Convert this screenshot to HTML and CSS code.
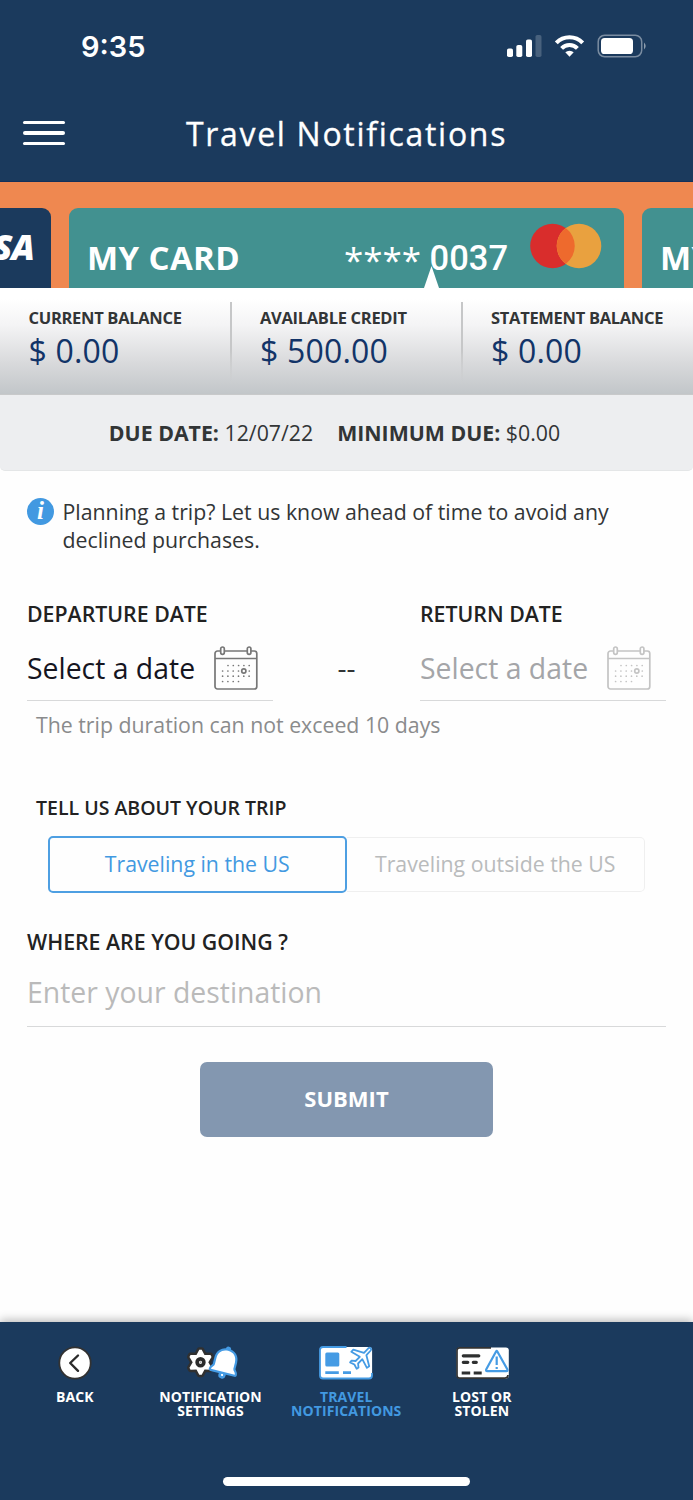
FILE: index.html
```html
<!DOCTYPE html>
<html lang="en">
<head>
<meta charset="UTF-8">
<meta name="viewport" content="width=device-width, initial-scale=1.0">
<title>Travel Notifications</title>
<link rel="stylesheet" href="styles.css">
</head>
<body>
<header class="header">
    <div class="status-bar">
        <span class="time">9:35</span>
        <svg class="status-icons" width="140" height="24" viewBox="0 0 140 24">
            <g fill="#fff">
                <rect x="1" y="14.5" width="6" height="8.5" rx="1.8"/>
                <rect x="10.3" y="11" width="6" height="12" rx="1.8"/>
                <rect x="20" y="5.5" width="6" height="17.5" rx="1.8"/>
                <rect x="29.5" y="1" width="6" height="22" rx="1.8" opacity=".2"/>
            </g>
            <g fill="none" stroke="#fff" stroke-width="4">
                <path d="M50.300 8.800a18.200 18.200 0 0 1 26.400 0"/>
                <path d="M55.600 14.400a11 11 0 0 1 15.800 0"/>
            </g>
            <path d="M59.3 18.300a6.300 6.300 0 0 1 8.400 0L63.500 22.800z" fill="#fff"/>
            <rect x="92.2" y="1.2" width="43.5" height="21.6" rx="6.5" fill="none" stroke="#fff" stroke-opacity=".42" stroke-width="1.5"/>
            <rect x="95" y="4" width="32" height="16" rx="3.6" fill="#fff"/>
            <path d="M138 8.500q3.400 3.500 0 7z" fill="#fff" opacity=".5"/>
        </svg>
    </div>
    <div class="title-bar">
        <button class="menu" aria-label="Menu"><span></span><span></span><span></span></button>
        <h1>Travel Notifications</h1>
    </div>
</header>

<section class="cards">
    <div class="card card-visa"><span class="visa">VISA</span></div>
    <div class="card card-main">
        <span class="card-name">MY CARD</span>
        <span class="card-number"><span class="stars">****</span> 0037</span>
        <svg class="mastercard" width="72" height="46" viewBox="0 0 72 46">
            <circle cx="22.5" cy="23" r="22.3" fill="#d92d2c"/>
            <circle cx="49" cy="23" r="22.3" fill="#e9a13f"/>
            <path d="M35.750 5.100a22.300 22.300 0 0 1 0 35.800a22.300 22.300 0 0 1 0-35.800z" fill="#ee6a2d"/>
        </svg>
        <span class="pointer"></span>
    </div>
    <div class="card card-next"><span class="card-name">MY CARD</span></div>
</section>

<section class="balances">
    <div class="balance"><h2>CURRENT BALANCE</h2><p>$ 0.00</p></div>
    <div class="balance"><h2>AVAILABLE CREDIT</h2><p>$ 500.00</p></div>
    <div class="balance"><h2>STATEMENT BALANCE</h2><p>$ 0.00</p></div>
</section>

<section class="due">
    <p><b>DUE DATE:</b> 12/07/22</p>
    <p><b>MINIMUM DUE:</b> $0.00</p>
</section>

<main class="content">
    <div class="info">
        <span class="info-icon">i</span>
        <p>Planning a trip? Let us know ahead of time to avoid any declined purchases.</p>
    </div>

    <div class="dates">
        <div class="date">
            <label>DEPARTURE DATE</label>
            <button class="date-field">Select a date
                <svg class="calendar" width="44" height="46" viewBox="0 0 44 46">
                    <g fill="none" stroke="currentColor" stroke-width="1.7">
                        <rect x="1" y="6" width="41.8" height="38" rx="2.5"/>
                        <path d="M1 13.500h41.800"/>
                        <rect x="6.7" y="2" width="3.6" height="7.3" rx="1.8" fill="#fff"/>
                        <rect x="33.3" y="2" width="3.6" height="7.3" rx="1.8" fill="#fff"/>
                        <circle cx="29.8" cy="26" r="2.1"/>
                    </g>
                    <g fill="none" stroke="currentColor" stroke-width="1.7" stroke-linecap="round">
                        <path stroke-dasharray="0 5.300" d="M14 20.500h22"/>
                        <path stroke-dasharray="0 5.300" d="M8.600 26h17M35.300 26h1"/>
                        <path stroke-dasharray="0 5.300" d="M8.600 31.200h27"/>
                        <path stroke-dasharray="0 5.300" d="M8.600 36.500h17"/>
                    </g>
                </svg>
            </button>
        </div>
        <span class="dash">--</span>
        <div class="date disabled">
            <label>RETURN DATE</label>
            <button class="date-field">Select a date
                <svg class="calendar" width="44" height="46" viewBox="0 0 44 46">
                    <g fill="none" stroke="currentColor" stroke-width="1.7">
                        <rect x="1" y="6" width="41.8" height="38" rx="2.5"/>
                        <path d="M1 13.500h41.800"/>
                        <rect x="6.7" y="2" width="3.6" height="7.3" rx="1.8" fill="#fff"/>
                        <rect x="33.3" y="2" width="3.6" height="7.3" rx="1.8" fill="#fff"/>
                        <circle cx="29.8" cy="26" r="2.1"/>
                    </g>
                    <g fill="none" stroke="currentColor" stroke-width="1.7" stroke-linecap="round">
                        <path stroke-dasharray="0 5.300" d="M14 20.500h22"/>
                        <path stroke-dasharray="0 5.300" d="M8.600 26h17M35.300 26h1"/>
                        <path stroke-dasharray="0 5.300" d="M8.600 31.200h27"/>
                        <path stroke-dasharray="0 5.300" d="M8.600 36.500h17"/>
                    </g>
                </svg>
            </button>
        </div>
    </div>
    <p class="hint">The trip duration can not exceed 10 days</p>

    <h3 class="trip-title">TELL US ABOUT YOUR TRIP</h3>
    <div class="toggle">
        <button class="active">Traveling in the US</button>
        <button>Traveling outside the US</button>
    </div>

    <label class="where" for="destination">WHERE ARE YOU GOING ?</label>
    <input type="text" id="destination" placeholder="Enter your destination">

    <button class="submit">SUBMIT</button>
</main>

<nav class="tabs">
    <div class="tab-list">
        <a class="tab">
            <svg width="56" height="36" viewBox="0 0 56 36">
                <circle cx="28" cy="18" r="15.7" fill="#fff" stroke="#323232" stroke-width="1.8"/>
                <path d="M31 10.500L23.200 18l7.800 7.800" fill="none" stroke="#2b2b2b" stroke-width="2.4" stroke-linecap="round" stroke-linejoin="round"/>
            </svg>
            <span>BACK</span>
        </a>
        <a class="tab">
            <svg width="56" height="36" viewBox="0 0 56 36">
                <path d="M16.300 4.800h2.400L21.500 10l6-.1 1 2-3.200 5.400 3.200 5.400-1 2-6-.1-2.800 5.200h-2.400l-2.800-5.200-6 .1-1-2 3.200-5.400-3.200-5.400 1-2 6 .1z" fill="#fff" stroke="#303030" stroke-width="5" stroke-linejoin="round" paint-order="stroke"/>
                <circle cx="17.5" cy="17.3" r="3.4" fill="#fff" stroke="#2b2b2b" stroke-width="3.6"/>
                <circle cx="17.5" cy="17.3" r="1" fill="#aaa"/>
                <g transform="rotate(14 42 18)" stroke="#459be4" stroke-linejoin="round">
                    <circle cx="42" cy="3.8" r="1.6" fill="#459be4" stroke-width="2"/>
                    <circle cx="42" cy="30.3" r="2.4" fill="#fff" stroke-width="2.6"/>
                    <path d="M42 5.500c-6 0-9.500 4-9.500 9.500v6.600c0 2-2.800 3-2.800 5.400h24.600c0-2.400-2.800-3.400-2.800-5.400V15c0-5.500-3.500-9.500-9.500-9.500z" fill="#fff" stroke-width="4.4" paint-order="stroke"/>
                </g>
            </svg>
            <span>NOTIFICATION<br>SETTINGS</span>
        </a>
        <a class="tab current">
            <svg width="56" height="36" viewBox="0 0 56 36">
                <rect x="1.9" y="1.9" width="52.2" height="31.8" rx="3" fill="#fff"/>
                <path d="M28.500 2H5Q2 2 2 5v25.500q0 3 3 3h46q3 0 3-3V28" fill="none" stroke="#459be4" stroke-width="1.8"/>
                <rect x="7.3" y="7.5" width="14" height="14" rx="1.5" fill="#459be4"/>
                <path d="M7.300 27.600h13.500M25 27.600h8" stroke="#459be4" stroke-width="2.8"/>
                <path d="M50.300 3.300c1.800-1.500 3.800.4 2.400 2.200l-4.300 4.700 2.800 11-2.300 1.700-4.600-8.700-4.200 4.300.4 4-1.800 1.300-2.300-4.300-4.300-2.100 1.500-1.800 4 .4 4.200-4.200-8.500-5 2-2.100 10.700 3.100z" fill="#fff" stroke="#459be4" stroke-width="1.8" stroke-linejoin="round"/>
            </svg>
            <span>TRAVEL<br>NOTIFICATIONS</span>
        </a>
        <a class="tab">
            <svg width="56" height="36" viewBox="0 0 56 36">
                <rect x="2.6" y="2.4" width="52.2" height="31.2" rx="3" fill="#fff"/>
                <path d="M37 2.900H5.500Q3 2.900 3 5.500v25q0 2.600 2.500 2.600H51q3 0 3-3" fill="none" stroke="#333" stroke-width="1.7"/>
                <path d="M9.300 10.800h15.500M9.300 17.300h4.500M19.300 17.300h3" stroke="#2f3030" stroke-width="3.2" stroke-linecap="round"/>
                <path d="M7.700 28h8.500M19.700 28h8" stroke="#2f3030" stroke-width="3"/>
                <path d="M43.200 6.300Q42.700 5.600 42.200 6.300L32.300 24.200q-.8 1.900 1 1.900h19q1.800 0 1-1.900z" fill="#fff" stroke="#459be4" stroke-width="2.2" stroke-linejoin="round"/>
                <path d="M42.700 11.500v8.500M42.700 22v2" stroke="#459be4" stroke-width="2.2"/>
            </svg>
            <span>LOST OR<br>STOLEN</span>
        </a>
    </div>
    <div class="home-bar"></div>
</nav>
</body>
</html>
```
FILE: styles.css
```css
* {
    box-sizing: border-box;
}
body {
    margin: 0;
    height: 1500px;
    display: flex;
    flex-direction: column;
    overflow: hidden;
    background: #fefefe;
    color: #323536;
    font-family: "Open Sans", sans-serif;
}
h1, h2, h3, p {
    margin: 0;
}
button {
    font-family: inherit;
    padding: 0;
    border: none;
    background: none;
}

/* Header */
.header {
    height: 182px;
    background: #1b3a5d;
    border-bottom: 1px solid #15305a;
    color: #fff;
}
.status-bar {
    display: flex;
    justify-content: space-between;
    align-items: center;
    height: 92px;
    padding: 0 47px 0 81px;
}
.time {
    font-family: Inter, sans-serif;
    font-weight: 600;
    font-size: 29px;
}
.title-bar {
    display: grid;
    grid-template-columns: 42px 1fr 42px;
    align-items: center;
    height: 82px;
    padding: 0 23px;
}
.menu {
    display: flex;
    flex-direction: column;
    gap: 7px;
}
.menu span {
    width: 42px;
    height: 3.3px;
    border-radius: 2px;
    background: #fff;
}
h1 {
    padding-top: 2px;
    font-size: 32px;
    font-weight: 500;
    line-height: 44px;
    letter-spacing: 1.7px;
    text-align: center;
    -webkit-text-stroke: .3px #fff;
}

/* Card carousel */
.cards {
    display: flex;
    justify-content: center;
    gap: 18px;
    height: 106px;
    padding-top: 26px;
    background: #ef8850;
    overflow: hidden;
}
.card {
    flex: none;
    width: 555px;
    height: 80px;
    border-radius: 9px 9px 0 0;
    background: #429190;
    color: #fff;
    display: flex;
    align-items: center;
    padding: 0 18px;
}
.card-main {
    position: relative;
}
.card-visa {
    background: #1b3a5d;
    justify-content: flex-end;
    padding-right: 17px;
}
.visa {
    padding-bottom: 4px;
    font-size: 35px;
    font-weight: 800;
    font-style: italic;
    letter-spacing: -1px;
}
.card-name {
    font-size: 33px;
    font-weight: 700;
    line-height: 40px;
    letter-spacing: .4px;
    padding-top: 20px;
}
.card-number {
    margin-left: auto;
    font-family: Roboto, sans-serif;
    font-size: 34.5px;
    font-weight: 500;
    line-height: 40px;
    padding-top: 20px;
}
.stars {
    font-family: "Open Sans", sans-serif;
    font-size: 35px;
    font-weight: 400;
    line-height: 30px;
    vertical-align: -3px;
}
.mastercard {
    margin: 0 4px 5px 22px;
}
.pointer {
    position: absolute;
    left: 355px;
    bottom: 0;
    width: 15px;
    height: 22px;
    background: #fff;
    clip-path: polygon(50% 0, 100% 100%, 0 100%);
}

/* Balances */
.balances {
    display: grid;
    grid-template-columns: 229.5px 231px 1fr;
    height: 107px;
    padding-top: 14px;
    background: linear-gradient(#fff 10%, #f4f4f5 35%, #d9dadc 70%, #c2c6c9);
    border-bottom: 1px solid #c8c9ca;
}
.balance {
    height: 80px;
    padding-left: 28.5px;
    border-left: 2px solid;
    border-image: linear-gradient(#c6c7c8 60%, #c6c7c800) 1;
}
.balance:first-child {
    border: none;
}
h2 {
    margin-top: 4px;
    font-size: 16.5px;
    font-weight: 700;
    line-height: 24px;
    letter-spacing: -.3px;
    white-space: nowrap;
}
.balance p {
    color: #123468;
    font-size: 32px;
    line-height: 42px;
    letter-spacing: .2px;
}
.due {
    display: flex;
    justify-content: center;
    gap: 24px;
    height: 76px;
    padding-right: 24px;
    background: #edeef0;
    border-bottom: 1px solid #e4e6e7;
    border-radius: 0 0 5px 5px;
    font-size: 21.3px;
    line-height: 75px;
}

/* Form */
.content {
    flex: 1;
    display: flex;
    flex-direction: column;
    padding: 27px 27px 0;
}
.info {
    display: flex;
    gap: 8.5px;
    font-size: 21.3px;
    line-height: 28px;
}
.info-icon {
    flex: none;
    width: 27px;
    height: 27px;
    border-radius: 50%;
    background: #4299e1;
    color: #fff;
    font-family: "Liberation Serif", serif;
    font-weight: bold;
    font-style: italic;
    font-size: 25px;
    line-height: 26px;
    text-align: center;
}
.dates {
    display: flex;
    justify-content: space-between;
    align-items: flex-end;
    margin-top: 46px;
}
.date {
    width: 246px;
}
.date label,
.where {
    display: block;
    color: #222;
    font-size: 21.3px;
    font-weight: 600;
    line-height: 28px;
}
.date-field {
    display: flex;
    align-items: center;
    justify-content: space-between;
    width: 100%;
    height: 66px;
    margin-top: 7px;
    padding-right: 15px;
    border-bottom: 1px solid #d8d9da;
    color: #15151f;
    font-size: 28.4px;
}
.calendar {
    color: #777;
}
.disabled .date-field {
    color: #a4a5a8;
}
.disabled .calendar {
    color: #c4c4c4;
}
.dash {
    font-size: 28px;
    font-weight: 500;
    line-height: 68px;
}
.hint {
    margin: 10px 0 0 9px;
    color: #8a8b8c;
    font-size: 21.3px;
    line-height: 28px;
}
.trip-title {
    margin: 55px 0 0 9px;
    color: #222;
    font-size: 19.5px;
    font-weight: 600;
    line-height: 28px;
}
.toggle {
    display: flex;
    align-items: center;
    margin: 14px 21px 0;
    height: 57px;
}
.toggle button {
    width: 299px;
    height: 55px;
    padding-bottom: 3px;
    border: 1px solid #efefef;
    border-left: none;
    border-radius: 0 5px 5px 0;
    color: #b9bbbc;
    font-size: 21.3px;
}
.toggle .active {
    height: 57px;
    border: 2px solid #4e9fe2;
    border-radius: 5px;
    color: #4299e1;
}
.where {
    margin-top: 35px;
}
#destination {
    width: 100%;
    height: 71px;
    padding: 2px 0 0;
    border: none;
    border-bottom: 1px solid #d8d9da;
    background: none;
    font-family: inherit;
    font-size: 28.4px;
}
#destination::placeholder {
    color: #bababa;
}
.submit {
    align-self: center;
    width: 293px;
    height: 75px;
    margin-top: 35px;
    padding-bottom: 4px;
    border-radius: 7px;
    background: #8397b0;
    color: #fff;
    font-size: 22px;
    font-weight: 700;
}

/* Bottom tabs */
.tabs {
    display: flex;
    flex-direction: column;
    height: 178px;
    background: #1b3a5d;
    box-shadow: 0 -2px 9px rgba(0, 0, 0, .28);
}
.tab-list {
    display: grid;
    grid-template-columns: repeat(4, 135.7px);
    padding: 23px 0 0 7px;
}
.tab {
    display: flex;
    flex-direction: column;
    align-items: center;
    gap: 9px;
    color: #fff;
    font-size: 14px;
    font-weight: 700;
    line-height: 14px;
    letter-spacing: .1px;
    text-align: center;
}
.current {
    color: #4299e1;
}
.home-bar {
    width: 247px;
    height: 9px;
    margin: auto auto 14px;
    border-radius: 5px;
    background: #fff;
}
```
